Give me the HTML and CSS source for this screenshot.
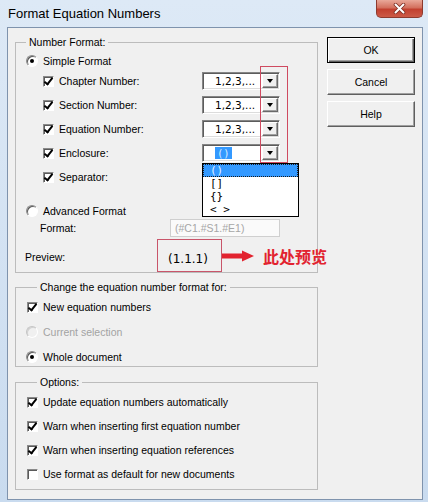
FILE: index.html
```html
<!DOCTYPE html>
<html lang="en">

<head>
    <meta charset="UTF-8">
    <title>Format Equation Numbers</title>
    <link rel="stylesheet" href="styles.css">
</head>

<body>
    <div class="window">
        <!-- 标题栏 -->
        <div class="titlebar">
            <span class="title">Format Equation Numbers</span>
            <a href="javascript:;" class="closeBtn">
                <svg width="13" height="11" viewBox="0 0 13 11">
                    <path d="M2.5 1.5 L10.5 9.5 M10.5 1.5 L2.5 9.5" stroke="#7e2f24" stroke-width="3.6" stroke-linecap="round" />
                    <path d="M2.5 1.5 L10.5 9.5 M10.5 1.5 L2.5 9.5" stroke="#fff" stroke-width="2" stroke-linecap="round" />
                </svg>
            </a>
        </div>

        <div class="client">
            <div class="leftCol">
                <!-- Number Format -->
                <fieldset class="group numFormat">
                    <legend>Number Format:</legend>
                    <div class="opt simpleRow"><span class="radio on"></span>Simple Format</div>
                    <div class="subList">
                        <div class="subRow"><span class="check on"></span><span class="subLabel">Chapter Number:</span>
                            <span class="combo"><span class="comboText">1,2,3,...</span><span class="dropBtn"></span></span>
                        </div>
                        <div class="subRow"><span class="check on"></span><span class="subLabel">Section Number:</span>
                            <span class="combo"><span class="comboText">1,2,3,...</span><span class="dropBtn"></span></span>
                        </div>
                        <div class="subRow"><span class="check on"></span><span class="subLabel">Equation Number:</span>
                            <span class="combo"><span class="comboText">1,2,3,...</span><span class="dropBtn"></span></span>
                        </div>
                        <div class="subRow"><span class="check on"></span><span class="subLabel">Enclosure:</span>
                            <span class="combo open"><span class="comboText"><span class="sel">()</span></span><span class="dropBtn"></span>
                                <!-- 展开的下拉列表 -->
                                <ul class="dropList">
                                    <li class="current">()</li>
                                    <li>[]</li>
                                    <li>{}</li>
                                    <li>&lt; &gt;</li>
                                </ul>
                            </span>
                        </div>
                        <!-- Separator 的下拉框被列表挡住了 -->
                        <div class="subRow"><span class="check on"></span><span class="subLabel">Separator:</span></div>
                        <!-- 红框标注 -->
                        <div class="redMark"></div>
                    </div>
                    <div class="opt advRow"><span class="radio"></span>Advanced Format</div>
                    <div class="formatRow"><span class="fmtLabel">Format:</span><span class="textBox">(#C1.#S1.#E1)</span></div>
                    <div class="previewRow">
                        <span class="previewLabel">Preview:</span>
                        <span class="previewBox">(1.1.1)</span>
                        <svg class="arrow" width="32" height="12" viewBox="0 0 32 12">
                            <rect x="0" y="3.5" width="22" height="5" fill="#e2232f" />
                            <polygon points="20,0.5 32,6 20,11.5" fill="#e2232f" />
                        </svg>
                        <span class="note">此处预览</span>
                    </div>
                </fieldset>

                <!-- Change for -->
                <fieldset class="group changeGroup">
                    <legend>Change the equation number format for:</legend>
                    <div class="opt"><span class="check on"></span>New equation numbers</div>
                    <div class="opt disabled"><span class="radio"></span>Current selection</div>
                    <div class="opt"><span class="radio on"></span>Whole document</div>
                </fieldset>

                <!-- Options -->
                <fieldset class="group optGroup">
                    <legend>Options:</legend>
                    <div class="opt"><span class="check on"></span>Update equation numbers automatically</div>
                    <div class="opt"><span class="check on"></span>Warn when inserting first equation number</div>
                    <div class="opt"><span class="check on"></span>Warn when inserting equation references</div>
                    <div class="opt"><span class="check"></span>Use format as default for new documents</div>
                </fieldset>
            </div>

            <div class="rightCol">
                <button class="btn default">OK</button>
                <button class="btn">Cancel</button>
                <button class="btn">Help</button>
            </div>
        </div>
    </div>
</body>

</html>
```

FILE: styles.css
```css
* {
    margin: 0;
    padding: 0;
    box-sizing: border-box;
    list-style-type: none;
}

body {
    background-color: #fff;
    font-family: "Liberation Sans", Arial, sans-serif;
    font-size: 10.5px;
    color: #000;
}

/* 窗口外框 */
.window {
    width: 428px;
    height: 502px;
    padding: 0 5px 2px 7px;
    background: linear-gradient(#dde9f6, #c9dbef);
    display: flex;
    flex-direction: column;
}

.titlebar {
    height: 27px;
    flex-shrink: 0;
    display: flex;
    align-items: flex-start;
}

.title {
    padding: 6px 0 0 1px;
    font-size: 13px;
    line-height: 15px;
}

.closeBtn {
    margin-left: auto;
    width: 47px;
    height: 18px;
    display: flex;
    align-items: center;
    justify-content: center;
    border: 1px solid #8d3a2e;
    border-top: none;
    border-radius: 0 0 5px 5px;
    background: linear-gradient(#e9a899, #d3705e 45%, #c2402f 55%, #cc5a47);
}

/* 客户区 */
.client {
    flex: 1;
    border: 1px solid #7f93ad;
    background-color: #f0f0f0;
    display: flex;
    gap: 9px;
    padding-left: 7px;
}

.leftCol {
    width: 303px;
}

.rightCol {
    width: 88px;
    padding-top: 9px;
    display: flex;
    flex-direction: column;
    gap: 6px;
}

/* 分组框 */
.group {
    border: 1px solid #bcbcbc;
    min-width: 0;
    padding: 0;
}

.group legend {
    margin-left: 10px;
    padding: 0 3px;
    line-height: 14px;
}

.numFormat {
    margin-top: 7px;
}

.changeGroup {
    margin-top: 7px;
    padding: 4px 0 0 11px;
    display: flex;
    flex-direction: column;
    gap: 7px;
}

.optGroup {
    margin-top: 8px;
    padding: 4px 0 6px 11px;
    display: flex;
    flex-direction: column;
    gap: 6px;
}

.opt {
    height: 18px;
    display: flex;
    align-items: center;
    gap: 5px;
    white-space: nowrap;
}

.opt.disabled {
    color: #a3a3a3;
}

/* 复选框 */
.check {
    position: relative;
    width: 11px;
    height: 11px;
    flex-shrink: 0;
    border: 1px solid;
    border-color: #8a8a8a #fff #fff #8a8a8a;
    box-shadow: inset 1px 1px #5a5a5a;
    background-color: #fff;
}

.check.on::after {
    content: "";
    position: absolute;
    left: 2px;
    top: -1px;
    width: 3px;
    height: 7px;
    border: solid #000;
    border-width: 0 2px 2px 0;
    transform: rotate(38deg);
}

/* 单选框 */
.radio {
    position: relative;
    width: 12px;
    height: 12px;
    margin-left: -1px;
    flex-shrink: 0;
    border-radius: 50%;
    border: 1px solid;
    border-color: #8a8a8a #fff #fff #8a8a8a;
    box-shadow: inset 1px 1px #5a5a5a;
    background-color: #fff;
}

.radio.on::after {
    content: "";
    position: absolute;
    left: 3px;
    top: 3px;
    width: 4px;
    height: 4px;
    border-radius: 50%;
    background-color: #000;
}

.disabled .radio {
    border-color: #c4c4c4 #fff #fff #c4c4c4;
    box-shadow: inset 1px 1px #d2d2d2;
    background-color: #f0f0f0;
}

/* Number Format 里面的行 */
.simpleRow {
    margin-top: 4px;
    height: 16px;
    padding-left: 11px;
}

.subList {
    position: relative;
}

.subRow {
    height: 24px;
    padding-left: 27px;
    display: flex;
    align-items: center;
}

.subLabel {
    width: 148px;
    padding-left: 5px;
}

.combo {
    position: relative;
    width: 78px;
    height: 18px;
    display: flex;
    align-items: center;
    justify-content: space-between;
    border: 1px solid;
    border-color: #858585 #fff #fff #858585;
    box-shadow: inset 1px 1px #5c5c5c, inset -1px -1px #dcdcdc;
    background-color: #fff;
    padding: 1px;
}

.comboText {
    padding-left: 11px;
    font-family: "DejaVu Sans", sans-serif;
    font-size: 10.5px;
}

.sel {
    display: inline-block;
    padding: 0 2px;
    line-height: 12px;
    background-color: #3399ff;
    color: #d6ebff;
    font-family: "DejaVu Sans Mono", monospace;
}

.dropBtn {
    width: 16px;
    height: 14px;
    display: flex;
    align-items: center;
    justify-content: center;
    background-color: #f0f0f0;
    border: 1px solid;
    border-color: #fff #6a6a6a #6a6a6a #fff;
    box-shadow: inset -1px -1px #a0a0a0;
}

.dropBtn::after {
    content: "";
    border-left: 3.5px solid transparent;
    border-right: 3.5px solid transparent;
    border-top: 4px solid #000;
}

/* 下拉列表 */
.dropList {
    position: absolute;
    left: -1px;
    top: 18px;
    width: 97px;
    z-index: 2;
    border: 1px solid #000;
    background-color: #fff;
    font-family: "DejaVu Sans Mono", monospace;
    font-size: 11px;
}

.dropList li {
    height: 13px;
    line-height: 13px;
    padding-left: 7px;
}

.dropList li.current {
    background-color: #3399ff;
    color: #e3f1ff;
    outline: 1px dotted #1a1a1a;
    outline-offset: -1px;
}

.redMark {
    position: absolute;
    left: 244px;
    top: -3px;
    width: 28px;
    height: 97px;
    border: 1px solid #cf4a60;
    z-index: 1;
}

.advRow {
    margin-top: 14px;
    height: 16px;
    padding-left: 11px;
}

.formatRow {
    height: 18px;
    padding-left: 24px;
    display: flex;
    align-items: center;
}

.fmtLabel {
    width: 130px;
}

.textBox {
    width: 110px;
    height: 18px;
    line-height: 16px;
    padding-left: 4px;
    border: 1px solid #cfcfcf;
    background-color: #fafafa;
    color: #a6a6a6;
}

.previewRow {
    margin-top: 2px;
    padding-left: 9px;
    display: flex;
    align-items: flex-start;
}

.previewRow > * {
    flex-shrink: 0;
}

.previewLabel {
    width: 132px;
    padding-top: 11px;
    line-height: 14px;
}

.previewBox {
    width: 65px;
    height: 33px;
    padding: 12px 0 0 10px;
    line-height: 15px;
    border: 1px solid #c9556a;
    font-family: "DejaVu Sans", sans-serif;
    font-size: 12px;
}

.arrow {
    margin-top: 11px;
}

.note {
    margin-left: 9px;
    margin-top: 7px;
    line-height: 20px;
    font-family: "Noto Sans CJK SC", sans-serif;
    font-size: 16px;
    font-weight: bold;
    color: #e2232f;
    white-space: nowrap;
}

/* 按钮 */
.btn {
    width: 88px;
    height: 26px;
    font: inherit;
    color: #000;
    background-color: #f0f0f0;
    border: 1px solid;
    border-color: #fff #5f5f5f #5f5f5f #fff;
    box-shadow: inset -1px -1px #a0a0a0;
}

.btn.default {
    border: 1px solid #000;
    box-shadow: inset 1px 1px #fff, inset -1px -1px #5f5f5f, inset -2px -2px #a0a0a0;
}
```
